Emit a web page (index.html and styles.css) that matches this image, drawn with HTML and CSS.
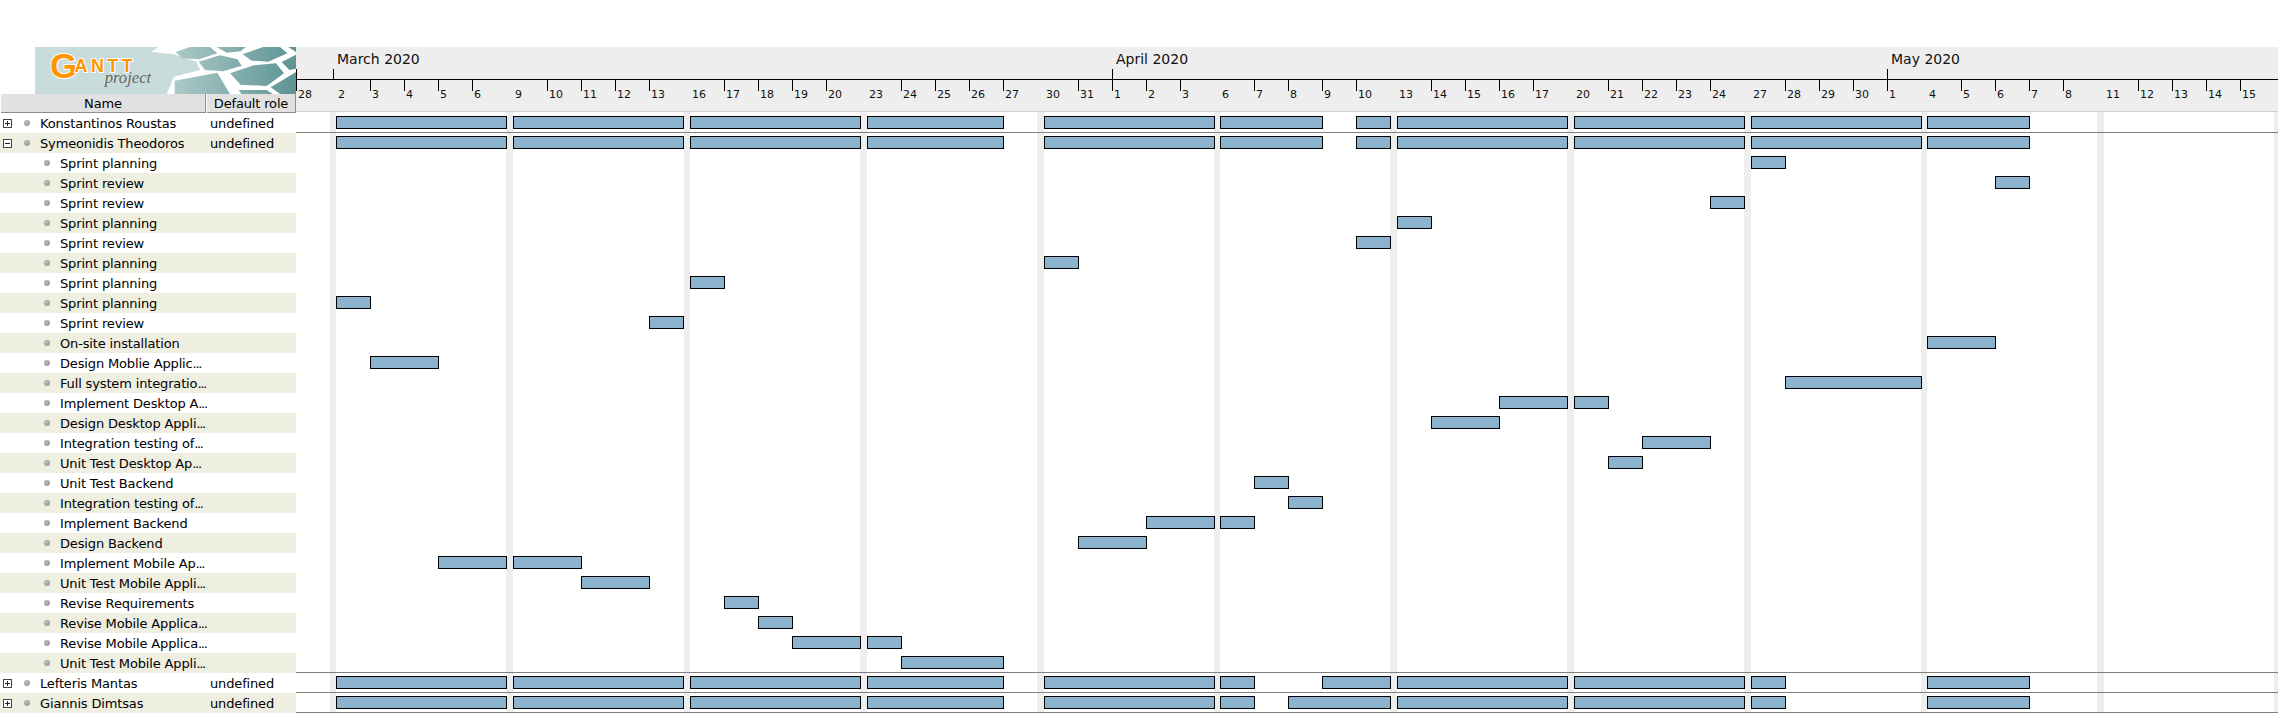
FILE: index.html
```html
<!DOCTYPE html>
<html lang="en">
<head>
<meta charset="utf-8">
<title>GanttProject</title>
<link rel="stylesheet" href="styles.css">
</head>
<body>
<main class="app">
  <section class="tree">
    <div class="logo">
      <svg class="logo-art" viewBox="105 51 783 141" preserveAspectRatio="none" role="img" aria-label="GanttProject logo">
        <defs>
          <linearGradient id="teal" gradientUnits="userSpaceOnUse" x1="380" y1="0" x2="880" y2="0">
            <stop offset="0" stop-color="#cadddd"/>
            <stop offset="1" stop-color="#5f9595"/>
          </linearGradient>
        </defs>
        <rect x="105" y="51" width="783" height="141" fill="#c9dcdc"/>
        <polygon points="455,65 475,51 888,51 888,192 500,192 522,140 600,120 590,95 518,72 490,70" fill="#fff"/>
        <polygon points="527,66 570,51 630,51 652,70 597,88 545,85" fill="url(#teal)"/>
        <polygon points="650,51 737,51 722,64 680,68" fill="url(#teal)"/>
        <polygon points="728,73 790,51 840,51 862,70 805,95 755,92" fill="url(#teal)"/>
        <polygon points="596,95 660,76 712,88 725,107 670,124 615,120" fill="url(#teal)"/>
        <polygon points="690,130 762,106 828,100 852,130 800,168 722,164" fill="url(#teal)"/>
        <polygon points="524,152 652,128 690,192 524,192" fill="url(#teal)"/>
        <polygon points="865,51 888,51 888,66" fill="url(#teal)"/>
        <polygon points="845,96 888,74 888,116 868,120" fill="url(#teal)"/>
        <polygon points="812,172 888,126 888,192 840,192" fill="url(#teal)"/>
        <polygon points="716,180 800,180 818,192 724,192" fill="url(#teal)"/>
        <text class="logo-word" x="150" y="143"><tspan class="logo-g">G</tspan><tspan class="logo-antt" dx="-8" dy="-18">ANTT</tspan></text>
        <text class="logo-project" x="314" y="158">project</text>
      </svg>
    </div>
    <div class="tree-head">
      <div class="head-cell head-name">Name</div>
      <div class="head-cell head-role">Default role</div>
    </div>
    <div class="tree-rows">
      <div class="row"><span class="toggle plus"></span><span class="dot"></span><span class="name">Konstantinos Roustas</span><span class="role">undefined</span></div>
      <div class="row"><span class="toggle minus"></span><span class="dot"></span><span class="name">Symeonidis Theodoros</span><span class="role">undefined</span></div>
      <div class="row task"><span class="dot"></span><span class="name">Sprint planning</span></div>
      <div class="row task"><span class="dot"></span><span class="name">Sprint review</span></div>
      <div class="row task"><span class="dot"></span><span class="name">Sprint review</span></div>
      <div class="row task"><span class="dot"></span><span class="name">Sprint planning</span></div>
      <div class="row task"><span class="dot"></span><span class="name">Sprint review</span></div>
      <div class="row task"><span class="dot"></span><span class="name">Sprint planning</span></div>
      <div class="row task"><span class="dot"></span><span class="name">Sprint planning</span></div>
      <div class="row task"><span class="dot"></span><span class="name">Sprint planning</span></div>
      <div class="row task"><span class="dot"></span><span class="name">Sprint review</span></div>
      <div class="row task"><span class="dot"></span><span class="name">On-site installation</span></div>
      <div class="row task"><span class="dot"></span><span class="name">Design Moblie Applic<span class="more">...</span></span></div>
      <div class="row task"><span class="dot"></span><span class="name">Full system integratio<span class="more">...</span></span></div>
      <div class="row task"><span class="dot"></span><span class="name">Implement Desktop A<span class="more">...</span></span></div>
      <div class="row task"><span class="dot"></span><span class="name">Design Desktop Appli<span class="more">...</span></span></div>
      <div class="row task"><span class="dot"></span><span class="name">Integration testing of<span class="more">...</span></span></div>
      <div class="row task"><span class="dot"></span><span class="name">Unit Test Desktop Ap<span class="more">...</span></span></div>
      <div class="row task"><span class="dot"></span><span class="name">Unit Test Backend</span></div>
      <div class="row task"><span class="dot"></span><span class="name">Integration testing of<span class="more">...</span></span></div>
      <div class="row task"><span class="dot"></span><span class="name">Implement Backend</span></div>
      <div class="row task"><span class="dot"></span><span class="name">Design Backend</span></div>
      <div class="row task"><span class="dot"></span><span class="name">Implement Mobile Ap<span class="more">...</span></span></div>
      <div class="row task"><span class="dot"></span><span class="name">Unit Test Mobile Appli<span class="more">...</span></span></div>
      <div class="row task"><span class="dot"></span><span class="name">Revise Requirements</span></div>
      <div class="row task"><span class="dot"></span><span class="name">Revise Mobile Applica<span class="more">...</span></span></div>
      <div class="row task"><span class="dot"></span><span class="name">Revise Mobile Applica<span class="more">...</span></span></div>
      <div class="row task"><span class="dot"></span><span class="name">Unit Test Mobile Appli<span class="more">...</span></span></div>
      <div class="row"><span class="toggle plus"></span><span class="dot"></span><span class="name">Lefteris Mantas</span><span class="role">undefined</span></div>
      <div class="row"><span class="toggle plus"></span><span class="dot"></span><span class="name">Giannis Dimtsas</span><span class="role">undefined</span></div>
    </div>
  </section>

  <section class="gantt">
    <div class="scale">
      <div class="scale-axis"></div>
      <span class="month" style="left:0"></span>
      <span class="month" style="left:37px"><span class="month-label">March 2020</span></span>
      <span class="month" style="left:816px"><span class="month-label">April 2020</span></span>
      <span class="month" style="left:1591px"><span class="month-label">May 2020</span></span>
      <span class="day" style="left:0">28</span>
      <span class="day monday" style="left:40px">2</span><span class="day" style="left:74px">3</span><span class="day" style="left:108px">4</span><span class="day" style="left:142px">5</span><span class="day" style="left:176px">6</span>
      <span class="day monday" style="left:217px">9</span><span class="day" style="left:251px">10</span><span class="day" style="left:285px">11</span><span class="day" style="left:319px">12</span><span class="day" style="left:353px">13</span>
      <span class="day monday" style="left:394px">16</span><span class="day" style="left:428px">17</span><span class="day" style="left:462px">18</span><span class="day" style="left:496px">19</span><span class="day" style="left:530px">20</span>
      <span class="day monday" style="left:571px">23</span><span class="day" style="left:605px">24</span><span class="day" style="left:639px">25</span><span class="day" style="left:673px">26</span><span class="day" style="left:707px">27</span>
      <span class="day monday" style="left:748px">30</span><span class="day" style="left:782px">31</span><span class="day" style="left:816px">1</span><span class="day" style="left:850px">2</span><span class="day" style="left:884px">3</span>
      <span class="day monday" style="left:924px">6</span><span class="day" style="left:958px">7</span><span class="day" style="left:992px">8</span><span class="day" style="left:1026px">9</span><span class="day" style="left:1060px">10</span>
      <span class="day monday" style="left:1101px">13</span><span class="day" style="left:1135px">14</span><span class="day" style="left:1169px">15</span><span class="day" style="left:1203px">16</span><span class="day" style="left:1237px">17</span>
      <span class="day monday" style="left:1278px">20</span><span class="day" style="left:1312px">21</span><span class="day" style="left:1346px">22</span><span class="day" style="left:1380px">23</span><span class="day" style="left:1414px">24</span>
      <span class="day monday" style="left:1455px">27</span><span class="day" style="left:1489px">28</span><span class="day" style="left:1523px">29</span><span class="day" style="left:1557px">30</span><span class="day" style="left:1591px">1</span>
      <span class="day monday" style="left:1631px">4</span><span class="day" style="left:1665px">5</span><span class="day" style="left:1699px">6</span><span class="day" style="left:1733px">7</span><span class="day" style="left:1767px">8</span>
      <span class="day monday" style="left:1808px">11</span><span class="day" style="left:1842px">12</span><span class="day" style="left:1876px">13</span><span class="day" style="left:1910px">14</span><span class="day" style="left:1944px">15</span>
    </div>
    <div class="chart">
      <span class="weekend" style="left:34px;width:6px"></span>
      <span class="weekend" style="left:210px;width:7px"></span>
      <span class="weekend" style="left:388px;width:6px"></span>
      <span class="weekend" style="left:564px;width:7px"></span>
      <span class="weekend" style="left:741px;width:7px"></span>
      <span class="weekend" style="left:918px;width:6px"></span>
      <span class="weekend" style="left:1094px;width:7px"></span>
      <span class="weekend" style="left:1271px;width:7px"></span>
      <span class="weekend" style="left:1448px;width:7px"></span>
      <span class="weekend" style="left:1625px;width:6px"></span>
      <span class="weekend" style="left:1801px;width:7px"></span>
      <span class="weekend" style="left:1978px;width:4px"></span>

      <div class="lane ruled"><span class="bar" style="left:40px;width:171px"></span><span class="bar" style="left:217px;width:171px"></span><span class="bar" style="left:394px;width:171px"></span><span class="bar" style="left:571px;width:137px"></span><span class="bar" style="left:748px;width:171px"></span><span class="bar" style="left:924px;width:103px"></span><span class="bar" style="left:1060px;width:35px"></span><span class="bar" style="left:1101px;width:171px"></span><span class="bar" style="left:1278px;width:171px"></span><span class="bar" style="left:1455px;width:171px"></span><span class="bar" style="left:1631px;width:103px"></span></div>
      <div class="lane"><span class="bar" style="left:40px;width:171px"></span><span class="bar" style="left:217px;width:171px"></span><span class="bar" style="left:394px;width:171px"></span><span class="bar" style="left:571px;width:137px"></span><span class="bar" style="left:748px;width:171px"></span><span class="bar" style="left:924px;width:103px"></span><span class="bar" style="left:1060px;width:35px"></span><span class="bar" style="left:1101px;width:171px"></span><span class="bar" style="left:1278px;width:171px"></span><span class="bar" style="left:1455px;width:171px"></span><span class="bar" style="left:1631px;width:103px"></span></div>
      <div class="lane"><span class="bar" style="left:1455px;width:35px"></span></div>
      <div class="lane"><span class="bar" style="left:1699px;width:35px"></span></div>
      <div class="lane"><span class="bar" style="left:1414px;width:35px"></span></div>
      <div class="lane"><span class="bar" style="left:1101px;width:35px"></span></div>
      <div class="lane"><span class="bar" style="left:1060px;width:35px"></span></div>
      <div class="lane"><span class="bar" style="left:748px;width:35px"></span></div>
      <div class="lane"><span class="bar" style="left:394px;width:35px"></span></div>
      <div class="lane"><span class="bar" style="left:40px;width:35px"></span></div>
      <div class="lane"><span class="bar" style="left:353px;width:35px"></span></div>
      <div class="lane"><span class="bar" style="left:1631px;width:69px"></span></div>
      <div class="lane"><span class="bar" style="left:74px;width:69px"></span></div>
      <div class="lane"><span class="bar" style="left:1489px;width:137px"></span></div>
      <div class="lane"><span class="bar" style="left:1203px;width:69px"></span><span class="bar" style="left:1278px;width:35px"></span></div>
      <div class="lane"><span class="bar" style="left:1135px;width:69px"></span></div>
      <div class="lane"><span class="bar" style="left:1346px;width:69px"></span></div>
      <div class="lane"><span class="bar" style="left:1312px;width:35px"></span></div>
      <div class="lane"><span class="bar" style="left:958px;width:35px"></span></div>
      <div class="lane"><span class="bar" style="left:992px;width:35px"></span></div>
      <div class="lane"><span class="bar" style="left:850px;width:69px"></span><span class="bar" style="left:924px;width:35px"></span></div>
      <div class="lane"><span class="bar" style="left:782px;width:69px"></span></div>
      <div class="lane"><span class="bar" style="left:142px;width:69px"></span><span class="bar" style="left:217px;width:69px"></span></div>
      <div class="lane"><span class="bar" style="left:285px;width:69px"></span></div>
      <div class="lane"><span class="bar" style="left:428px;width:35px"></span></div>
      <div class="lane"><span class="bar" style="left:462px;width:35px"></span></div>
      <div class="lane"><span class="bar" style="left:496px;width:69px"></span><span class="bar" style="left:571px;width:35px"></span></div>
      <div class="lane ruled"><span class="bar" style="left:605px;width:103px"></span></div>
      <div class="lane ruled"><span class="bar" style="left:40px;width:171px"></span><span class="bar" style="left:217px;width:171px"></span><span class="bar" style="left:394px;width:171px"></span><span class="bar" style="left:571px;width:137px"></span><span class="bar" style="left:748px;width:171px"></span><span class="bar" style="left:924px;width:35px"></span><span class="bar" style="left:1026px;width:69px"></span><span class="bar" style="left:1101px;width:171px"></span><span class="bar" style="left:1278px;width:171px"></span><span class="bar" style="left:1455px;width:35px"></span><span class="bar" style="left:1631px;width:103px"></span></div>
      <div class="lane ruled"><span class="bar" style="left:40px;width:171px"></span><span class="bar" style="left:217px;width:171px"></span><span class="bar" style="left:394px;width:171px"></span><span class="bar" style="left:571px;width:137px"></span><span class="bar" style="left:748px;width:171px"></span><span class="bar" style="left:924px;width:35px"></span><span class="bar" style="left:992px;width:103px"></span><span class="bar" style="left:1101px;width:171px"></span><span class="bar" style="left:1278px;width:171px"></span><span class="bar" style="left:1455px;width:35px"></span><span class="bar" style="left:1631px;width:103px"></span></div>
    </div>
  </section>
</main>
</body>
</html>
```
FILE: styles.css
```css
* { box-sizing: border-box; }

html, body {
  margin: 0;
  height: 100%;
  overflow: hidden;
  background: #fff;
  color: #000;
  font-family: "DejaVu Sans", sans-serif;
}

.app {
  display: flex;
  height: 713px;
  padding-top: 47px;
}

/* left task tree */
.tree {
  flex: 0 0 296px;
  width: 296px;
  display: flex;
  flex-direction: column;
}

.logo {
  height: 47px;
  padding-left: 35px;
}

.logo-art {
  display: block;
  width: 261px;
  height: 47px;
}

.logo-word {
  fill: #ff9500;
  font-family: "Liberation Sans", sans-serif;
  font-weight: 700;
  stroke: #fff;
  stroke-width: 6px;
  paint-order: stroke;
}

.logo-g { font-size: 105px; }
.logo-antt { font-size: 54px; letter-spacing: 10px; }

.logo-project {
  fill: #666;
  font-family: "Liberation Serif", serif;
  font-style: italic;
  font-size: 50px;
}

.tree-head {
  display: flex;
  height: 19px;
  padding-left: 1px;
  font-size: 13px;
  letter-spacing: -0.15px;
}

.head-cell {
  display: flex;
  align-items: center;
  justify-content: center;
  height: 19px;
  background: #e1e1e1;
  border-bottom: 1px solid #8d8d8d;
  border-right: 1px solid #8d8d8d;
}

.head-name { width: 205px; margin-right: 1px; }
.head-role { width: 89px; }

.tree-rows { display: flex; flex-direction: column; }

.row {
  display: flex;
  align-items: center;
  height: 20px;
  padding-left: 3px;
  font-size: 13px;
  letter-spacing: -0.15px;
  white-space: nowrap;
}

.row:nth-child(even) { background: #eeeee1; }

.row.task { padding-left: 44px; }

.more { letter-spacing: -1.3px; }

.toggle {
  flex: none;
  width: 9px;
  height: 9px;
  margin-right: 12px;
  border: 1px solid #444;
  background-color: #fff;
  background-repeat: no-repeat;
  background-position: center;
}

.plus {
  background-image: linear-gradient(#222, #222), linear-gradient(#222, #222);
  background-size: 5px 1px, 1px 5px;
}

.minus {
  background-image: linear-gradient(#222, #222);
  background-size: 5px 1px;
}

.dot {
  flex: none;
  width: 6px;
  height: 6px;
  margin-right: 10px;
  margin-top: -1px;
  border-radius: 50%;
  background: radial-gradient(circle at 40% 35%, #bdbdbd, #8a8a8a);
}

.name { flex: 0 0 170px; }
.task .name { flex: none; }

/* timeline */
.gantt {
  flex: 1;
  min-width: 0;
  display: flex;
  flex-direction: column;
}

.scale {
  position: relative;
  flex: none;
  height: 65px;
  background: #eee;
  border-bottom: 1px solid #d0d0d0;
  overflow: hidden;
}

.scale-axis {
  position: absolute;
  left: 0;
  right: 0;
  top: 32px;
  border-top: 1px solid #000;
}

.month {
  position: absolute;
  top: 22px;
  height: 10px;
  border-left: 1px solid #000;
}

.month-label {
  position: absolute;
  left: 3px;
  bottom: 11px;
  font-size: 14px;
  line-height: 18px;
  white-space: nowrap;
  color: #111;
}

.day {
  position: absolute;
  top: 33px;
  height: 24px;
  padding: 8px 0 0 2px;
  font-size: 11px;
  line-height: 14px;
  color: #111;
  background: linear-gradient(#000, #000) left top / 1px 11px no-repeat;
}

.day.monday { background: none; }

.chart {
  position: relative;
  flex: 1;
  padding-top: 1px;
  overflow: hidden;
}

.weekend {
  position: absolute;
  top: 0;
  bottom: 0;
  background: #eee;
}

.lane {
  position: relative;
  height: 20px;
}

.lane.ruled { border-bottom: 1px solid #808080; }

.bar {
  position: absolute;
  top: 3px;
  height: 13px;
  background: #8cb3cd;
  border: 1px solid #000;
}
```
